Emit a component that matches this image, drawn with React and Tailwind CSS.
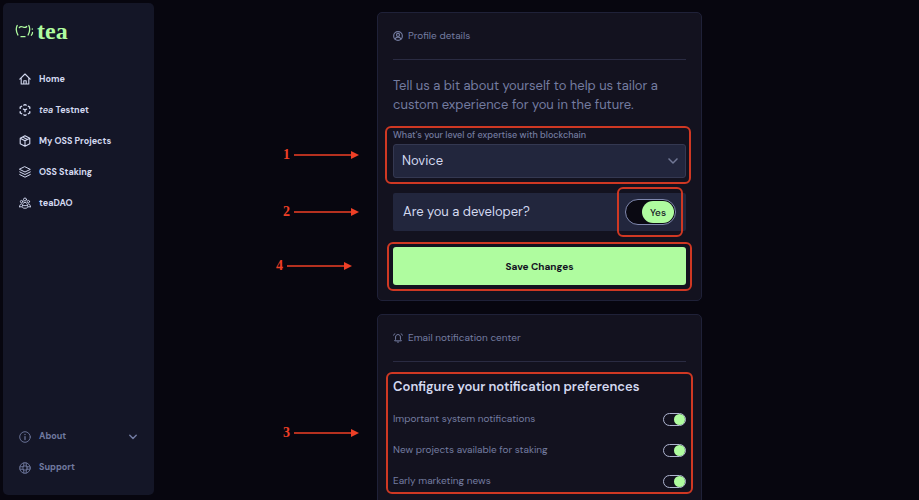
import { useState } from 'react';

const Icon = ({ className = 'size-3', strokeWidth = 1.1, children }) => (
  <svg
    viewBox="0 0 12 12"
    className={`shrink-0 ${className}`}
    fill="none"
    stroke="currentColor"
    strokeWidth={strokeWidth}
    strokeLinecap="round"
    strokeLinejoin="round"
  >
    {children}
  </svg>
);

const HomeIcon = () => (
  <Icon>
    <path d="M.8 6.200L6 1L11.200 6.200M2.200 5.200V11H9.800V5.200M4.800 11V7.800H7.200V11" />
  </Icon>
);

const TestnetIcon = () => (
  <Icon strokeWidth={1.3}>
    <path d="M4.800 1.200L6 .7L7.200 1.200M9.300 2.300L10.800 3.100V4.400M10.800 7.600V8.900L9.300 9.700M7.200 10.800L6 11.300L4.800 10.800M2.700 9.700L1.200 8.900V7.600M1.200 4.400V3.100L2.700 2.300" />
    <path d="M4.400 5.100L6 5.900L7.600 5.100M6 5.900V7.700" />
  </Icon>
);

const BoxIcon = () => (
  <Icon>
    <path d="M6 .8L10.800 3.300V8.700L6 11.200L1.200 8.700V3.300ZM1.200 3.300L6 5.700L10.800 3.300M6 5.700V11.200M3.600 2.100L8.400 4.500" />
  </Icon>
);

const StackIcon = () => (
  <Icon strokeWidth={1}>
    <path d="M6 .8L11.300 3.400L6 6L.7 3.400ZM.7 5.900L6 8.500L11.300 5.900M.7 8.500L6 11.200L11.300 8.500" />
  </Icon>
);

const DaoIcon = () => (
  <Icon strokeWidth={0.9}>
    <circle cx="6" cy="2.500" r="1.500" />
    <circle cx="2.600" cy="4.600" r="1.200" />
    <circle cx="9.400" cy="4.600" r="1.200" />
    <path d="M3.400 9.200C3.400 6.800 4.400 5.400 6 5.400S8.600 6.800 8.600 9.200M.6 9.800C.6 7.900 1.300 7 2.600 6.900M11.400 9.800C11.400 7.900 10.700 7 9.400 6.900M.6 9.800H3.200L4.400 11.200H7.600L8.800 9.800H11.400M4.500 8.600H7.500" />
  </Icon>
);

const InfoIcon = () => (
  <Icon strokeWidth={0.9}>
    <circle cx="6" cy="6" r="5.300" />
    <path d="M6 5.500V8.600M6 3.400V3.600" strokeWidth="1.200" />
  </Icon>
);

const SupportIcon = () => (
  <Icon strokeWidth={0.9}>
    <circle cx="6" cy="6" r="5.300" />
    <circle cx="6" cy="6" r="2.200" />
    <path d="M4.900 1L4.600 4M7.100 1L7.400 4M4.900 11L4.600 8M7.100 11L7.400 8M1 4.900L4 4.600M1 7.100L4 7.400M11 4.900L8 4.600M11 7.100L8 7.400" />
  </Icon>
);

const ProfileIcon = () => (
  <Icon className="size-[10px]" strokeWidth={1.4}>
    <circle cx="6" cy="6" r="5.200" />
    <circle cx="6" cy="4.700" r="1.800" />
    <path d="M2.600 9.600C3.200 8 4.400 7.400 6 7.400S8.800 8 9.400 9.600" />
  </Icon>
);

const BellIcon = () => (
  <Icon className="size-[10px]" strokeWidth={1.2}>
    <path d="M2.200 9L3.100 7.600V4.800C3.100 3 4.300 1.900 6 1.900S8.900 3 8.900 4.800V7.600L9.800 9ZM4.900 10.600C5.400 11.300 6.600 11.300 7.100 10.600M2 .9L.7 2.700M10 .9L11.300 2.700" />
  </Icon>
);

const ChevronIcon = ({ className, strokeWidth }) => (
  <Icon className={className} strokeWidth={strokeWidth}>
    <path d="M1.200 3.500L6 8.300L10.800 3.500" />
  </Icon>
);

const navItems = [
  { label: 'Home', icon: HomeIcon },
  { label: 'Testnet', prefix: 'tea', icon: TestnetIcon },
  { label: 'My OSS Projects', icon: BoxIcon },
  { label: 'OSS Staking', icon: StackIcon },
  { label: 'teaDAO', icon: DaoIcon },
];

const preferences = [
  'Important system notifications',
  'New projects available for staking',
  'Early marketing news',
];

const Logo = () => (
  <a href="#" className="flex items-center gap-[3px] text-[#affc9f]">
    <svg viewBox="0 0 19 16" className="h-4 w-[19px]" fill="none" stroke="currentColor" strokeWidth="1.3" strokeLinecap="round">
      <path d="M2.200 2.500C.9 5 1 8.500 2.900 12M13.800 2.500C15.100 5 15 8.500 13.100 12" />
      <path d="M4.300 4.600C5.300 3.200 6.500 3.300 8 4S10.700 4.700 11.700 3.500M6 13.700H10" />
      <path d="M17.300 5.800V6.200M17.500 9.500C17.500 10.800 17.100 11.600 16.300 12.200" />
    </svg>
    <span className="font-['Liberation_Serif',serif] text-[24px] leading-6 font-bold">tea</span>
  </a>
);

const Sidebar = () => (
  <aside className="mt-[3px] mr-[6px] mb-[5px] ml-[3px] flex w-[151px] shrink-0 flex-col rounded-[5px] bg-[#141627] px-3 pt-4 pb-[19px]">
    <Logo />
    <nav className="mt-7 flex flex-col gap-[15px] pl-1">
      {navItems.map(({ label, prefix, icon: NavIcon }) => (
        <a key={label} href="#" className="flex h-4 items-center gap-2 text-[9px] leading-4 font-bold text-[#d3d9f0]">
          <NavIcon />
          <span>
            {prefix && <em className="font-semibold">{prefix} </em>}
            {label}
          </span>
        </a>
      ))}
    </nav>
    <div className="mt-auto flex flex-col gap-[15px] pl-1 text-[9px] font-bold text-[#717aa0]">
      <button className="flex h-4 items-center gap-2 pr-[5px]">
        <InfoIcon />
        About
        <ChevronIcon className="ml-auto size-2" strokeWidth={2.2} />
      </button>
      <a href="#" className="flex h-4 items-center gap-2">
        <SupportIcon />
        Support
      </a>
    </div>
  </aside>
);

const Card = ({ title, icon: TitleIcon, children }) => (
  <section className="rounded-[5px] border border-[#1f2138] bg-[#13121f] p-[15px]">
    <h2 className="flex items-center gap-[5px] border-b border-[#2a2b42] pb-[15px] text-[10px] leading-4 text-[#747ca0]">
      <TitleIcon />
      {title}
    </h2>
    {children}
  </section>
);

// Numbered arrow that sits to the left of the block it points at
const Marker = ({ number, className }) => (
  <div className={`pointer-events-none absolute right-full flex h-4 items-center gap-1 text-[#ee3f26] ${className}`}>
    <span className="font-['Liberation_Serif',serif] text-[14px] leading-4 font-bold">{number}</span>
    <svg viewBox="0 0 65 8" className="h-2 w-[65px]" fill="currentColor">
      <path d="M0 3.200H57V0L65 4L57 8V4.800H0Z" />
    </svg>
  </div>
);

const Outline = ({ className }) => (
  <div className={`pointer-events-none absolute rounded-[6px] border-2 border-[#cf3823] ${className}`} />
);

const App = () => {
  const [developer, setDeveloper] = useState(true);

  return (
    <div className="flex h-screen overflow-hidden bg-[#07060f] font-['DM_Sans','Inter',sans-serif]">
      <Sidebar />
      <main className="flex-1 pt-3">
        <div className="mx-auto flex w-full max-w-[325px] flex-col gap-[13px]">
          <Card title="Profile details" icon={ProfileIcon}>
            <p className="mt-4 text-[13px] leading-[19px] text-[#747ca0]">
              Tell us a bit about yourself to help us tailor a custom experience for you in the future.
            </p>

            <div className="relative mt-[15px]">
              <label htmlFor="level" className="block text-[9px] leading-3 font-medium text-[#747ca0]">
                What's your level of expertise with blockchain
              </label>
              <div className="relative mt-[3px] text-[#717896]">
                <select
                  id="level"
                  className="h-[34px] w-full appearance-none rounded-[3px] border border-[#343851] bg-[#22263d] px-2 text-[13px] text-[#d3d9f0]"
                >
                  <option>Novice</option>
                </select>
                <ChevronIcon className="pointer-events-none absolute top-3 right-2 size-[10px]" strokeWidth={1.8} />
              </div>
              <Outline className="-top-[3px] -right-[5px] -bottom-[6px] -left-2" />
              <Marker number="1" className="top-[18px] mr-[34px]" />
            </div>

            <div className="relative mt-[15px] flex h-[38px] items-center justify-between rounded-[2px] bg-[#22263d] px-[10px]">
              <label htmlFor="developer" className="text-[13px] text-[#d3d9f0]">
                Are you a developer?
              </label>
              <label className="relative flex h-[26px] w-[51px] items-center rounded-full border border-[#8088ae] bg-[#0a0912] p-px has-checked:justify-end">
                <input
                  id="developer"
                  type="checkbox"
                  checked={developer}
                  onChange={() => setDeveloper(!developer)}
                  className="sr-only"
                />
                <span className="flex h-[22px] w-8 items-center justify-center rounded-full bg-[#affc9f] text-[10px] font-medium text-[#13121f]">
                  {developer ? 'Yes' : 'No'}
                </span>
              </label>
              <Outline className="-top-[6px] right-[3px] -bottom-[6px] w-[66px]" />
              <Marker number="2" className="top-[11px] mr-[34px]" />
            </div>

            <div className="relative mt-4">
              <button className="h-[38px] w-full rounded-[3px] bg-[#affc9f] text-[10px] font-bold text-[#13121f]">
                Save Changes
              </button>
              <Outline className="-top-[5px] -right-[6px] -bottom-[6px] -left-[6px]" />
              <Marker number="4" className="top-[11px] mr-[41px]" />
            </div>
          </Card>

          <Card title="Email notification center" icon={BellIcon}>
            <div className="relative mt-[15px]">
              <h3 className="text-[13px] leading-5 font-semibold text-[#d3d9f0]">
                Configure your notification preferences
              </h3>
              <div className="mt-[14px] flex flex-col gap-[15px]">
                {preferences.map((name) => (
                  <label key={name} className="flex items-center justify-between text-[10px] leading-4 text-[#747ca0]">
                    {name}
                    <input type="checkbox" defaultChecked className="peer sr-only" />
                    <span className="flex h-[13px] w-[23px] items-center justify-end rounded-full border border-[#aeb4cf] peer-not-checked:justify-start">
                      <span className="size-[11px] rounded-full bg-[#affc9f]" />
                    </span>
                  </label>
                ))}
              </div>
              <Outline className="-top-[5px] -right-[7px] -bottom-[5px] -left-[7px]" />
              <Marker number="3" className="top-[48px] mr-[34px]" />
            </div>
          </Card>
        </div>
      </main>
    </div>
  );
};

export default App;
